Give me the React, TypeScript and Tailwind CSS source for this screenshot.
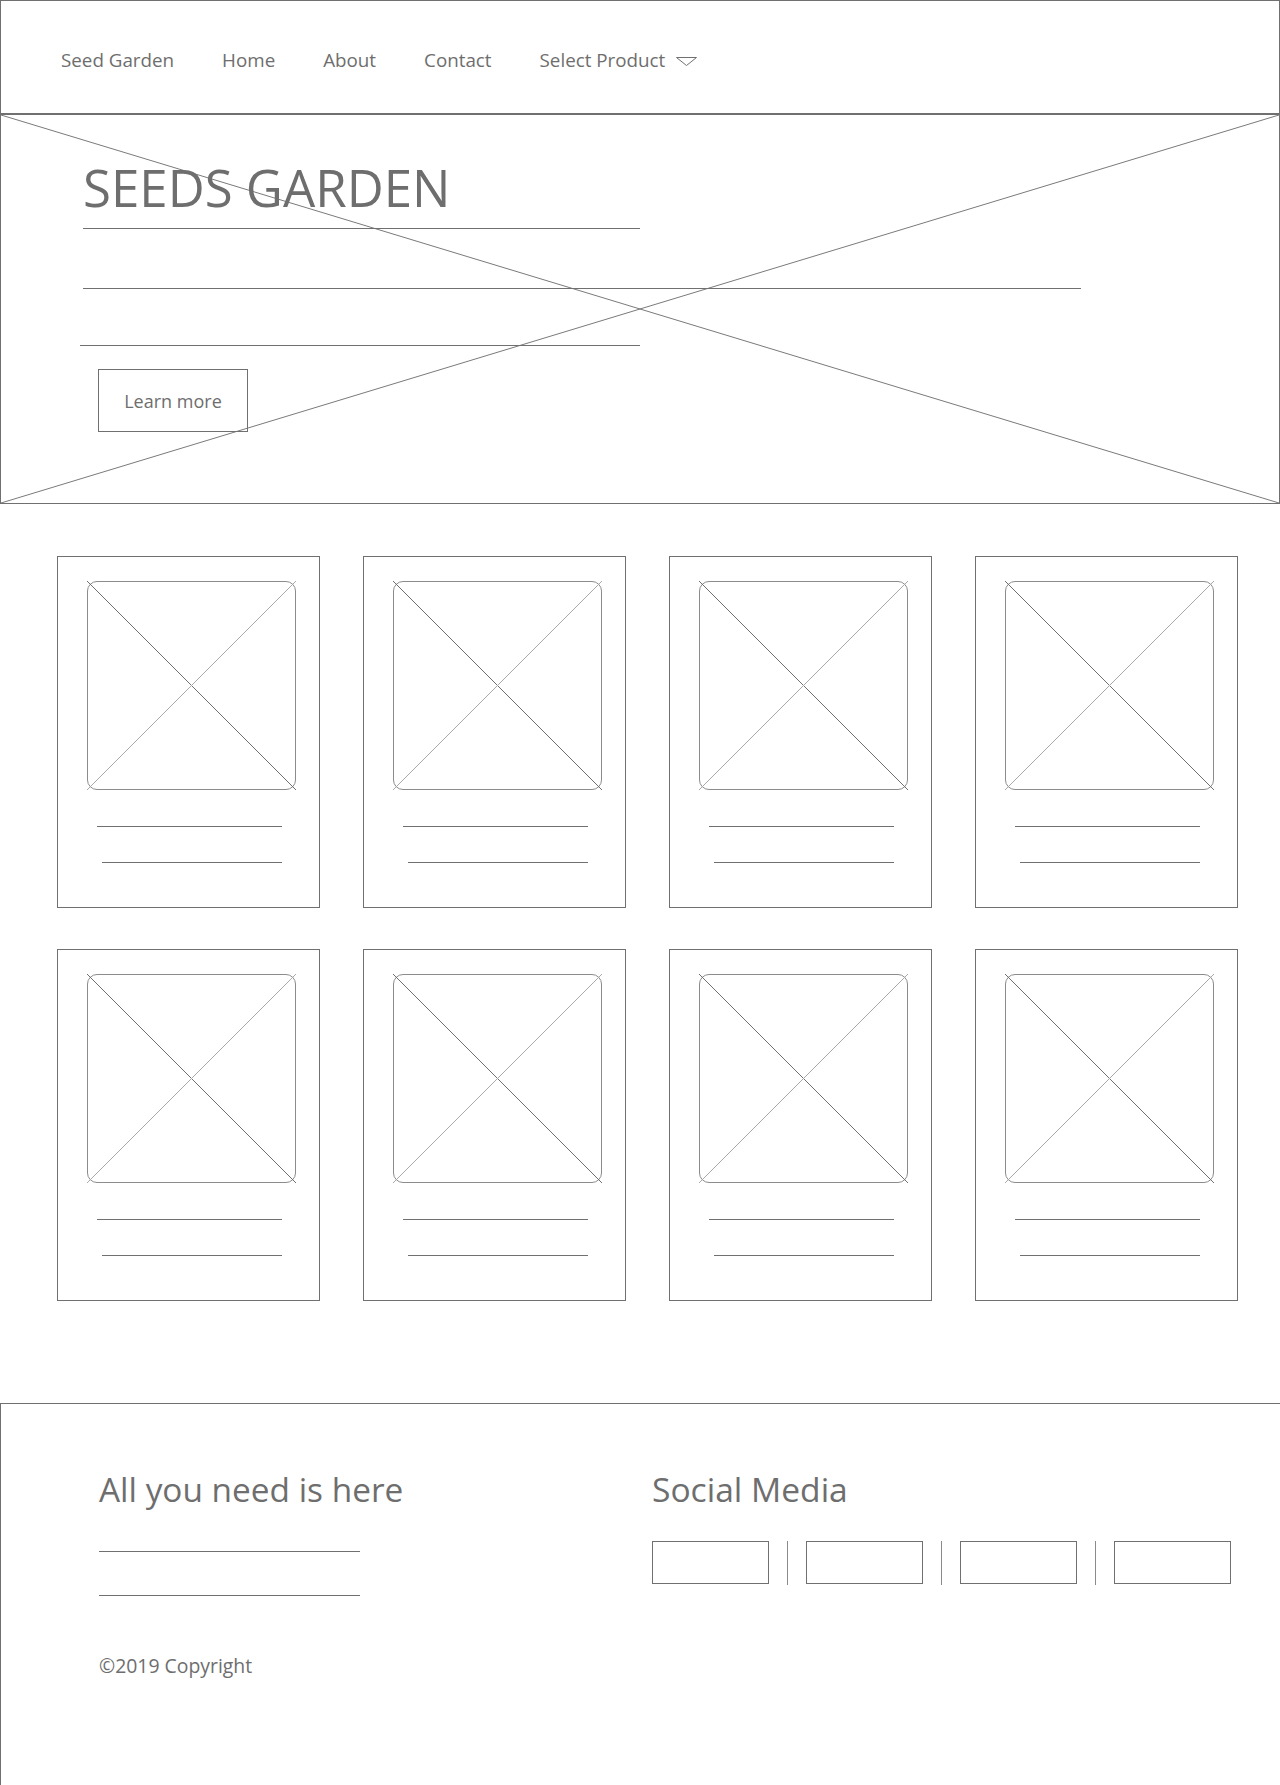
const line = "#707070";

function Cross({ light = "#a8a8a8", dark = "#6e6e6e" }: { light?: string; dark?: string }) {
  return (
    <svg
      className="absolute inset-0 h-full w-full"
      viewBox="0 0 100 100"
      preserveAspectRatio="none"
    >
      <line x1="0" y1="0" x2="100" y2="100" stroke={dark} strokeWidth="1" vectorEffect="non-scaling-stroke" />
      <line x1="0" y1="100" x2="100" y2="0" stroke={light} strokeWidth="1" vectorEffect="non-scaling-stroke" />
    </svg>
  );
}

function NavCaret() {
  return (
    <svg width="21" height="10" viewBox="0 0 21 10" className="ml-[11px] mt-[4px]">
      <polygon points="0.5,0.5 20.5,0.5 10.5,8.5" fill="none" stroke={line} strokeWidth="1" />
    </svg>
  );
}

function ProductCard() {
  return (
    <div className="h-[352px] border border-[#707070] pl-[29px] pt-[24px]">
      <div className="relative h-[209px] w-[209px]">
        <div className="absolute inset-0 rounded-[10px] border border-[#8c8c8c]" />
        <Cross />
      </div>
      <div className="ml-[10px] mt-[36px] h-px w-[185px] bg-[#707070]" />
      <div className="ml-[15px] mt-[35px] h-px w-[180px] bg-[#707070]" />
    </div>
  );
}

function SocialBoxes() {
  return (
    <div className="mt-[34px] flex items-center">
      {[0, 1, 2, 3].map((i) => (
        <div key={i} className="flex items-center">
          {i > 0 && <div className="mx-[18px] h-[44px] w-px bg-[#8a8a8a]" />}
          <div className="h-[43px] w-[117px] border border-[#707070]" />
        </div>
      ))}
    </div>
  );
}

export default function App() {
  return (
    <div className="min-h-[1785px] w-[1280px] bg-white font-['Open_Sans',sans-serif] text-[#6e6e6e]">
      <header className="flex h-[115px] items-center gap-12 border border-b-2 border-[#707070] pl-[60px] pt-[6px] text-[18.8px] leading-none">
        <span>Seed Garden</span>
        <span>Home</span>
        <span>About</span>
        <span>Contact</span>
        <span className="flex items-center">
          Select Product
          <NavCaret />
        </span>
      </header>

      <section className="relative h-[389px] border border-t-0 border-[#707070] pl-[82px] pt-[47px]">
        <Cross light="#7a7a7a" dark="#7a7a7a" />
        <div className="relative">
          <h1 className="text-[51px] font-normal leading-none">SEEDS GARDEN</h1>
          <div className="mt-[15px] h-px w-[557px] bg-[#707070]" />
          <div className="mt-[59px] h-px w-[998px] bg-[#707070]" />
          <div className="-ml-[3px] mt-[56px] h-px w-[560px] bg-[#707070]" />
          <button className="ml-[15px] mt-[23px] flex h-[63px] w-[150px] items-center justify-center border border-[#707070] bg-transparent text-[18px] leading-none">
            Learn more
          </button>
        </div>
      </section>

      <main className="grid grid-cols-[repeat(4,263px)] gap-x-[43px] gap-y-[41px] pl-[57px] pt-[52px]">
        {Array.from({ length: 8 }).map((_, i) => (
          <ProductCard key={i} />
        ))}
      </main>

      <footer className="mt-[102px] flex h-[383px] border-l border-t border-[#707070] pt-[69px]">
        <div className="w-[651px] pl-[98px]">
          <h2 className="text-[33.4px] font-normal leading-none">All you need is here</h2>
          <div className="mt-[45px] h-px w-[261px] bg-[#707070]" />
          <div className="mt-[43px] h-px w-[261px] bg-[#707070]" />
          <p className="mt-[60px] text-[19.4px] leading-none">©2019 Copyright</p>
        </div>
        <div>
          <h2 className="text-[33.6px] font-normal leading-none">Social Media</h2>
          <SocialBoxes />
        </div>
      </footer>
    </div>
  );
}
